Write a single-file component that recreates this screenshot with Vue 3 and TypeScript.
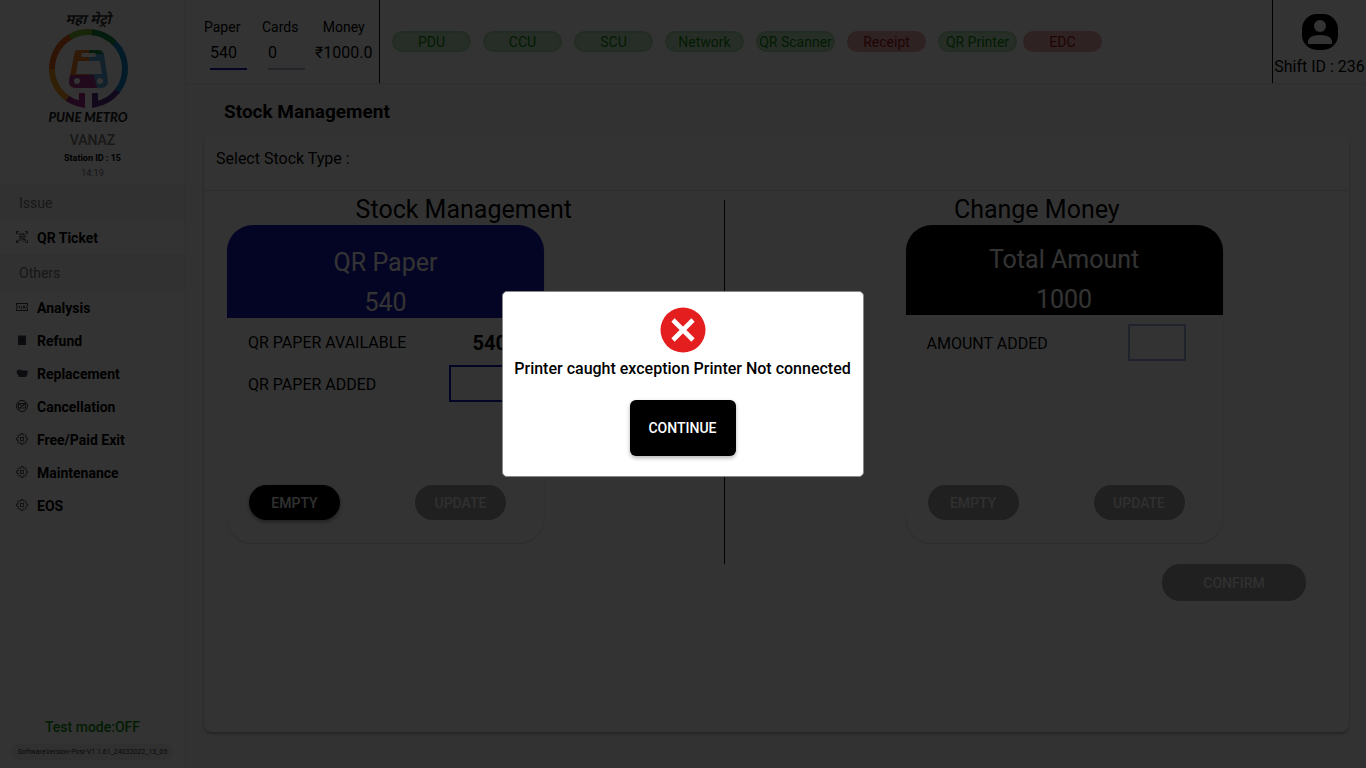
<script setup lang="ts">
import { ref } from 'vue'

interface Device { name: string; ok: boolean }
interface NavItem { label: string; icon: string }

const devices: Device[] = [
  { name: 'PDU', ok: true },
  { name: 'CCU', ok: true },
  { name: 'SCU', ok: true },
  { name: 'Network', ok: true },
  { name: 'QR Scanner', ok: true },
  { name: 'Receipt', ok: false },
  { name: 'QR Printer', ok: true },
  { name: 'EDC', ok: false },
]

const issueItems: NavItem[] = [{ label: 'QR Ticket', icon: 'qr' }]
const otherItems: NavItem[] = [
  { label: 'Analysis', icon: 'ticket' },
  { label: 'Refund', icon: 'refund' },
  { label: 'Replacement', icon: 'replace' },
  { label: 'Cancellation', icon: 'cancel' },
  { label: 'Free/Paid Exit', icon: 'gear' },
  { label: 'Maintenance', icon: 'gear' },
  { label: 'EOS', icon: 'gear' },
]
const groups = [
  { title: 'Issue', items: issueItems },
  { title: 'Others', items: otherItems },
]

const paperAdded = ref('')
const amountAdded = ref('')
const dialogOpen = ref(true)
</script>

<template>
  <div class="app">
    <aside class="sidebar">
      <svg class="logo" viewBox="0 0 106 116" role="img" aria-label="Pune Metro">
        <text x="48" y="14" class="logo-hindi" text-anchor="middle">महा मेट्रो</text>
        <g fill="none" stroke-width="6">
          <path d="M29 89.400A36.500 36.500 0 0 1 12 56" stroke="#f39a1e" />
          <path d="M12 59A36.500 36.500 0 0 1 31 26.500" stroke="#e8641f" />
          <path d="M30 27A36.500 36.500 0 0 1 53 22.300" stroke="#7cb82f" />
          <path d="M52 22.200A36.500 36.500 0 0 1 75 33.500" stroke="#118a43" />
          <path d="M74.500 33A36.500 36.500 0 0 1 77 81.500" stroke="#1283c6" />
          <path d="M77.500 81A36.500 36.500 0 0 1 55 94.400V83" stroke="#5b2a86" />
          <path d="M27.500 88.400A36.500 36.500 0 0 0 42 94.400V83" stroke="#a3238e" />
        </g>
        <path d="M35 41q1-1 4-1h10v38H36q-7 0-7-7z" fill="#ef7d22" />
        <path d="M49 40h9q5 0 6 4l4 27q0 7-7 7H49z" fill="#57a8de" />
        <path d="M49 40h9q4 0 5 4H49z" fill="#118a43" />
        <path d="M30 65h24l3 13H36q-7 0-7-7z" fill="#a83291" />
        <rect x="41" y="43" width="15" height="4" rx="2" fill="#fff" />
        <path d="M38 51h22l2 13H36z" fill="#fff" />
        <circle cx="37" cy="71" r="3" fill="#fff" />
        <circle cx="60" cy="71" r="3" fill="#fff" />
        <text x="48" y="112" class="logo-name" text-anchor="middle">PUNE METRO</text>
      </svg>
      <div class="station">VANAZ</div>
      <div class="station-id">Station ID : 15</div>
      <div class="clock">14:19</div>

      <nav>
        <section v-for="group in groups" :key="group.title">
          <h2 class="group">{{ group.title }}</h2>
          <a v-for="item in group.items" :key="item.label" class="nav-item" href="#">
            <svg class="nav-icon" viewBox="0 0 12 12" fill="none" stroke="#333" aria-hidden="true">
              <g v-if="item.icon === 'qr'" stroke-width=".8">
                <path d="M.5 3V.5H3M9 .5h2.500V3M11.500 9v2.500H9M3 11.500H.500V9" />
                <path d="M1 1l2 2M11 1L9 3M1 11l2-2M3 3.500h2V2M3 5.500h3v-3M7.500 2v2h2M7 5.500h3M3 7h2v3M4 9H2.500M7 7h1.500v1.500H7zM9.500 8v2M7 10h2M6 6v2" />
              </g>
              <g v-else-if="item.icon === 'ticket'">
                <path d="M.5 2.500h11v2l-1 1.500 1 1.500v2H.5v-2L1.500 6 .5 4.500z" />
                <path d="M3 4.500l1 3M5.500 5v3M7.500 4.500v3M9.500 4.500L8 6l1.500 2" stroke-width=".8" />
              </g>
              <g v-else-if="item.icon === 'refund'">
                <path d="M2 1.500h8v9.500H2z" fill="#445" stroke="none" />
                <path d="M8.500 4Q5 3 5 6t3 2.500M5 5h3M5 6.500h3" stroke="#223" stroke-width=".8" />
              </g>
              <g v-else-if="item.icon === 'replace'">
                <path d="M1 3.500Q4 1.500 6 3.500h5q1 0 .5 3Q11 10 9 10H4Q2 10 2 8L.5 6z" fill="#445" stroke="none" />
                <path d="M2 5.500h3l1-1h4" stroke="#223" stroke-width=".6" />
              </g>
              <g v-else-if="item.icon === 'cancel'">
                <circle cx="6" cy="6" r="5.500" />
                <path d="M2.500 3.500h7v4.500h-7zM2 10L10 2M3 4l3 2 3-2" stroke-width=".9" />
              </g>
              <g v-else stroke-width=".8">
                <path d="M5 .5h2v1.500l1 .5L9.200 1.500l1.300 1.300L9.500 4l.5 1h1.500v2H10l-.5 1 1 1.200-1.300 1.300L8 9.500l-1 .5v1.500H5V10l-1-.5-1.200 1-1.300-1.300 1-1.200L2 7H.5V5H2l.5-1-1-1.200 1.300-1.300L4 2.500 5 2z" />
                <rect x="4.500" y="4.500" width="3" height="3" />
              </g>
            </svg>
            <span>{{ item.label }}</span>
          </a>
        </section>
      </nav>

      <footer class="side-foot">
        <div class="test-mode">Test mode:OFF</div>
        <div class="version">SoftwareVersion-Posi-V1.1.61_24032022_13_05</div>
      </footer>
    </aside>

    <div class="content">
      <header class="topbar">
        <div class="stats">
          <div class="stat">
            <label for="paper">Paper</label>
            <input id="paper" class="stat-input paper" value="540" readonly />
          </div>
          <div class="stat">
            <label for="cards">Cards</label>
            <input id="cards" class="stat-input cards" value="0" readonly />
          </div>
          <div class="stat money">
            <span>Money</span>
            <span class="money-value">₹1000.0</span>
          </div>
        </div>
        <ul class="devices">
          <li v-for="d in devices" :key="d.name" class="device" :class="d.ok ? 'ok' : 'bad'">{{ d.name }}</li>
        </ul>
        <div class="user">
          <svg class="avatar" viewBox="0 0 36 36" aria-hidden="true">
            <rect width="36" height="36" rx="15" fill="#000" />
            <circle cx="18" cy="12" r="6" fill="#fff" />
            <path d="M6 30v-3q1-6 12-6t12 6v3z" fill="#fff" />
          </svg>
          <span>Shift ID : 236</span>
        </div>
      </header>

      <main class="main">
        <h1>Stock Management</h1>
        <div class="panel">
          <div class="panel-head">Select Stock Type :</div>
          <div class="columns">
            <section class="column left">
              <h2>Stock Management</h2>
              <div class="card">
                <div class="card-head blue">
                  <div>QR Paper</div>
                  <div>540</div>
                </div>
                <div class="card-body">
                  <div class="row">
                    <span>QR PAPER AVAILABLE</span>
                    <strong>540</strong>
                  </div>
                  <div class="row">
                    <label for="paper-added">QR PAPER ADDED</label>
                    <input id="paper-added" v-model="paperAdded" class="amount" />
                  </div>
                </div>
                <div class="actions">
                  <button class="pill active" type="button">EMPTY</button>
                  <button class="pill" type="button" disabled>UPDATE</button>
                </div>
              </div>
            </section>
            <section class="column right">
              <h2>Change Money</h2>
              <div class="card">
                <div class="card-head black">
                  <div>Total Amount</div>
                  <div>1000</div>
                </div>
                <div class="card-body">
                  <div class="row">
                    <label for="amount-added">AMOUNT ADDED</label>
                    <input id="amount-added" v-model="amountAdded" class="amount muted" disabled />
                  </div>
                </div>
                <div class="actions">
                  <button class="pill" type="button" disabled>EMPTY</button>
                  <button class="pill" type="button" disabled>UPDATE</button>
                </div>
              </div>
            </section>
          </div>
          <div class="confirm-row">
            <button class="pill confirm" type="button" disabled>CONFIRM</button>
          </div>
        </div>
      </main>
    </div>

    <div v-if="dialogOpen" class="overlay">
      <div class="dialog" role="alertdialog" aria-modal="true" aria-labelledby="dialog-text">
        <svg class="error-icon" viewBox="0 0 46 46" aria-hidden="true">
          <circle cx="23" cy="23" r="22.500" fill="#e41e1e" />
          <path d="M13 13L33 33M33 13L13 33" stroke="#fff" stroke-width="4.600" />
        </svg>
        <p id="dialog-text">Printer caught exception Printer Not connected</p>
        <button class="continue" type="button" @click="dialogOpen = false">CONTINUE</button>
      </div>
    </div>
  </div>
</template>

<style>
body { margin: 0; }
</style>

<style scoped>
.app, .app * { box-sizing: border-box; }
.app {
  display: flex;
  min-height: 100vh;
  background: #fafafa;
  color: #000;
  font-family: Roboto, "Noto Sans", sans-serif;
  font-size: 16px;
  line-height: 24px;
}
h1, h2, p, ul { margin: 0; padding: 0; }
button, input { font-family: inherit; }

.sidebar {
  display: flex;
  flex-direction: column;
  flex: 0 0 186px;
  background: #fff;
  border-right: 1px solid #e4e4e4;
  padding-top: 10px;
}
.logo { width: 106px; height: 116px; margin-left: 40px; }
.logo-hindi { font: italic 700 14px "Noto Sans Devanagari", "Noto Sans", sans-serif; fill: #333; }
.logo-name { font: italic 900 13px Lato, sans-serif; fill: #222; }
.station { margin-top: 4px; font-size: 14px; line-height: 20px; font-weight: 500; color: #777; text-align: center; }
.station-id { font-size: 9px; line-height: 16px; font-weight: 700; text-align: center; }
.clock { font-size: 9px; line-height: 14px; color: #666; text-align: center; margin-bottom: 4px; }
.group { height: 37px; padding-left: 19px; background: #f2f2f2; font-size: 14px; line-height: 38px; font-weight: 400; color: #777; }
.nav-item { display: flex; align-items: center; gap: 9px; height: 33px; padding-left: 16px; font-size: 14px; font-weight: 700; color: #000; text-decoration: none; }
.nav-icon { width: 12px; height: 12px; margin-bottom: 2px; }
.side-foot { margin-top: auto; text-align: center; padding-bottom: 8px; }
.test-mode { font-size: 14px; line-height: 20px; font-weight: 500; color: #0a8a0a; }
.version { margin: 7px 12px 0; border-radius: 7px; background: #f0f0f0; font-size: 7px; line-height: 16px; color: #333; white-space: nowrap; }

.content { flex: 1; min-width: 0; display: flex; flex-direction: column; }
.topbar { display: flex; height: 84px; border-bottom: 1px solid #e4e4e4; background: #fff; }
.stats { display: grid; grid-template-columns: 58px 53px 1fr; flex: none; width: 194px; padding: 15px 7px 0 18px; border-right: 1px solid #000; }
.stat { display: flex; flex-direction: column; font-size: 14px; }
.stat-input { width: 37px; height: 31px; margin-left: 6px; padding: 0 0 2px; border: 0; border-bottom: 2px solid; background: none; font-size: 16px; outline: 0; }
.paper { border-color: #1414b4; }
.cards { border-color: #b4b8d8; }
.money { align-items: center; white-space: nowrap; }
.money-value { font-size: 16px; line-height: 28px; }
.devices { display: flex; flex: 1; align-items: center; gap: 12px; padding-left: 12px; list-style: none; }
.device { width: 79px; height: 21px; border: 2px solid; border-radius: 11px; font-size: 14px; line-height: 18px; text-align: center; white-space: nowrap; }
.ok { background: #c4e4c4; border-color: #a8dca8; color: #0a8a0a; }
.bad { background: #e8a8a8; border-color: #e8a8a8; color: #a01414; }
.bad:last-child { margin-left: -6px; }
.user { display: flex; flex-direction: column; align-items: center; flex: none; width: 94px; padding-top: 14px; border-left: 1px solid #000; white-space: nowrap; }
.avatar { width: 36px; height: 36px; margin-bottom: 5px; }

.main { flex: 1; display: flex; flex-direction: column; padding: 16px 17px 36px 18px; }
h1 { padding-left: 20px; font-size: 19px; line-height: 24px; font-weight: 700; }
.panel { flex: 1; margin-top: 11px; border-radius: 8px; background: #fff; box-shadow: 0 2px 3px rgba(0, 0, 0, .3); }
.panel-head { height: 56px; padding: 12px; border-bottom: 1px solid #dedede; }
.columns { display: grid; grid-template-columns: 521fr 625fr; padding-top: 9px; }
.column { min-width: 0; height: 364px; }
.column h2 { font-size: 25px; line-height: 20px; font-weight: 400; text-align: center; margin-bottom: 5px; }
.left { border-right: 1px solid #000; }
.left .card { margin-left: 23px; }
.right .card { margin-left: 181px; }
.card { display: flex; flex-direction: column; width: 317px; height: 318px; border-radius: 26px; overflow: hidden; box-shadow: 0 1px 2px rgba(0, 0, 0, .2); }
.card-head { display: flex; flex-direction: column; gap: 8px; height: 93px; padding-top: 22px; font-size: 25px; line-height: 32px; color: #fff; text-align: center; }
.blue { background: #1414b4; }
.black { height: 90px; padding-top: 19px; background: #000; }
.card-body { display: flex; flex-direction: column; gap: 4px; padding: 6px 37px 0 21px; }
.right .card-body { padding-top: 9px; }
.row { display: flex; align-items: center; justify-content: space-between; height: 37px; }
.row label { padding-top: 2px; }
.row strong { font-size: 20px; }
.amount { width: 58px; height: 37px; border: 2px solid #1414b4; background: #fff; padding: 4px; }
.muted { border-color: #a0a8dc; }
.actions { display: flex; justify-content: space-between; margin-top: auto; padding: 0 38px 23px 22px; }
.pill { width: 91px; height: 35px; border: 0; border-radius: 18px; background: #9e9e9e; color: #eee; font-size: 14px; font-weight: 500; padding: 0; }
.active { background: #000; box-shadow: 0 2px 4px rgba(0, 0, 0, .4); }
.confirm-row { display: flex; justify-content: flex-end; padding-right: 43px; }
.confirm { width: 144px; height: 37px; }

.overlay { position: fixed; inset: 0; display: flex; align-items: center; justify-content: center; background: rgba(0, 0, 0, .8); }
.dialog { display: flex; flex-direction: column; align-items: center; padding: 15px 12px 20px 11px; border: 1px solid #888; border-radius: 5px; background: #fff; }
.error-icon { width: 46px; height: 46px; }
.dialog p { margin-top: 4px; font-weight: 500; white-space: nowrap; }
.continue { width: 106px; height: 56px; margin-top: 19px; border: 0; border-radius: 6px; background: #000; color: #fff; font-size: 14px; font-weight: 500; box-shadow: 0 2px 4px rgba(0, 0, 0, .3); }
</style>
